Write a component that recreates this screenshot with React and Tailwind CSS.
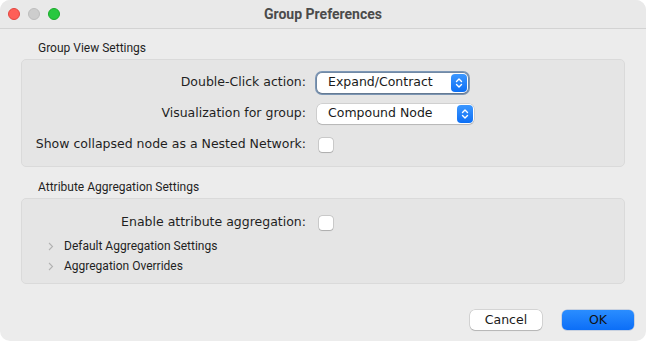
import React, { useState } from "react";

const sys = { fontFamily: "'DejaVu Sans', sans-serif" };
const small = { fontFamily: "Roboto, 'Noto Sans', sans-serif" };

const Stepper = () => (
  <span className="flex items-center justify-center w-[16px] h-[18px] rounded-[4px] bg-gradient-to-b from-[#3b97ff] to-[#0a6ff5]">
    <svg width="8" height="12" viewBox="0 0 8 12" fill="none">
      <path d="M1.5 4.5 L4 2 L6.5 4.5" stroke="white" strokeWidth="1.4" strokeLinecap="round" strokeLinejoin="round" />
      <path d="M1.5 7.5 L4 10 L6.5 7.5" stroke="white" strokeWidth="1.4" strokeLinecap="round" strokeLinejoin="round" />
    </svg>
  </span>
);

const Select = ({ value, width, focused }) => (
  <div
    className={
      focused
        ? "rounded-[7px] p-[2px] bg-[#7d97b6]"
        : "rounded-[6px] p-0"
    }
  >
    <div
      className="flex items-center justify-between h-[20px] pl-[11px] pr-[1px] bg-white rounded-[5px] shadow-[0_0_0_0.5px_rgba(0,0,0,0.18),0_1px_1px_rgba(0,0,0,0.12)]"
      style={{ width }}
    >
      <span className="text-[12.5px] text-[#1a1a1a] leading-none" style={sys}>
        {value}
      </span>
      <Stepper />
    </div>
  </div>
);

const Checkbox = () => {
  const [on, setOn] = useState(false);
  return (
    <button
      onClick={() => setOn(!on)}
      className="w-[14px] h-[14px] rounded-[3px] bg-white shadow-[0_0_0_0.5px_rgba(0,0,0,0.22),0_0.5px_1px_rgba(0,0,0,0.15)]"
    />
  );
};

const Row = ({ label, children, h = "h-[31px]" }) => (
  <div className={`flex items-center ${h}`}>
    <div
      className="w-[284px] text-right text-[12.5px] text-[#1f1f1f] whitespace-nowrap"
      style={sys}
    >
      {label}
    </div>
    <div className="pl-[11px] flex items-center">{children}</div>
  </div>
);

const Disclosure = ({ label }) => (
  <div className="flex items-center h-[20px] pl-[26px]">
    <svg width="6" height="9" viewBox="0 0 6 9" fill="none">
      <path d="M1 1 L4.5 4.5 L1 8" stroke="#b3b3b3" strokeWidth="1.1" />
    </svg>
    <span className="ml-[10px] text-[12px] text-[#1f1f1f]" style={small}>
      {label}
    </span>
  </div>
);

export default function App() {
  return (
    <div className="w-[646px] h-[341px] bg-white">
      <div className="h-full flex flex-col rounded-[10px] overflow-hidden bg-[#ececec]">
        <div className="h-[29px] shrink-0 grid grid-cols-[1fr_auto_1fr] items-center border-b border-[#d3d3d3] bg-[#e9e9e9]">
          <div className="flex items-center gap-[8px] pl-[8px]">
            <span className="w-[12px] h-[12px] rounded-full bg-[#fe5f57] border border-[#e2463f]" />
            <span className="w-[12px] h-[12px] rounded-full bg-[#cdcdcd] border border-[#bdbdbd]" />
            <span className="w-[12px] h-[12px] rounded-full bg-[#28c840] border border-[#1aab29]" />
          </div>
          <div className="text-[14px] font-bold text-[#4b4b4b]" style={small}>
            Group Preferences
          </div>
          <div />
        </div>

        <div className="flex-1 flex flex-col px-[21px]">
          <div className="h-[30px] flex items-end pb-[4px] pl-[17px] text-[12px] leading-[14px] text-[#1f1f1f]" style={small}>
            Group View Settings
          </div>
          <div className="h-[108px] rounded-[5px] border border-[#dadada] bg-[#e5e5e5] pt-[7px]">
            <Row label="Double-Click action:">
              <div className="-ml-[2px]">
                <Select value="Expand/Contract" width={151} focused />
              </div>
            </Row>
            <Row label="Visualization for group:">
              <Select value="Compound Node" width={157} />
            </Row>
            <Row label="Show collapsed node as a Nested Network:">
              <div className="pl-[2px] flex"><Checkbox /></div>
            </Row>
          </div>

          <div className="h-[31px] flex items-end pb-[4px] pl-[17px] text-[12px] leading-[14px] text-[#1f1f1f]" style={small}>
            Attribute Aggregation Settings
          </div>
          <div className="h-[86px] rounded-[5px] border border-[#dadada] bg-[#e5e5e5] pt-[10px]">
            <Row label="Enable attribute aggregation:" h="h-[27px]">
              <div className="pl-[2px] flex"><Checkbox /></div>
            </Row>
            <Disclosure label="Default Aggregation Settings" />
            <Disclosure label="Aggregation Overrides" />
          </div>

          <div className="flex justify-end gap-[20px] pt-[26px] mr-[-9px]">
            <button
              className="w-[72px] h-[20px] rounded-[5px] bg-white text-[12.5px] text-[#1a1a1a] shadow-[0_0_0_0.5px_rgba(0,0,0,0.2),0_1px_1px_rgba(0,0,0,0.15)]"
              style={sys}
            >
              Cancel
            </button>
            <button
              className="w-[72px] h-[20px] rounded-[5px] bg-gradient-to-b from-[#2a8dff] to-[#0b6ef7] text-[12.5px] text-[#111] shadow-[0_0_0_0.5px_rgba(0,60,160,0.3)]"
              style={sys}
            >
              OK
            </button>
          </div>
        </div>
      </div>
    </div>
  );
}
